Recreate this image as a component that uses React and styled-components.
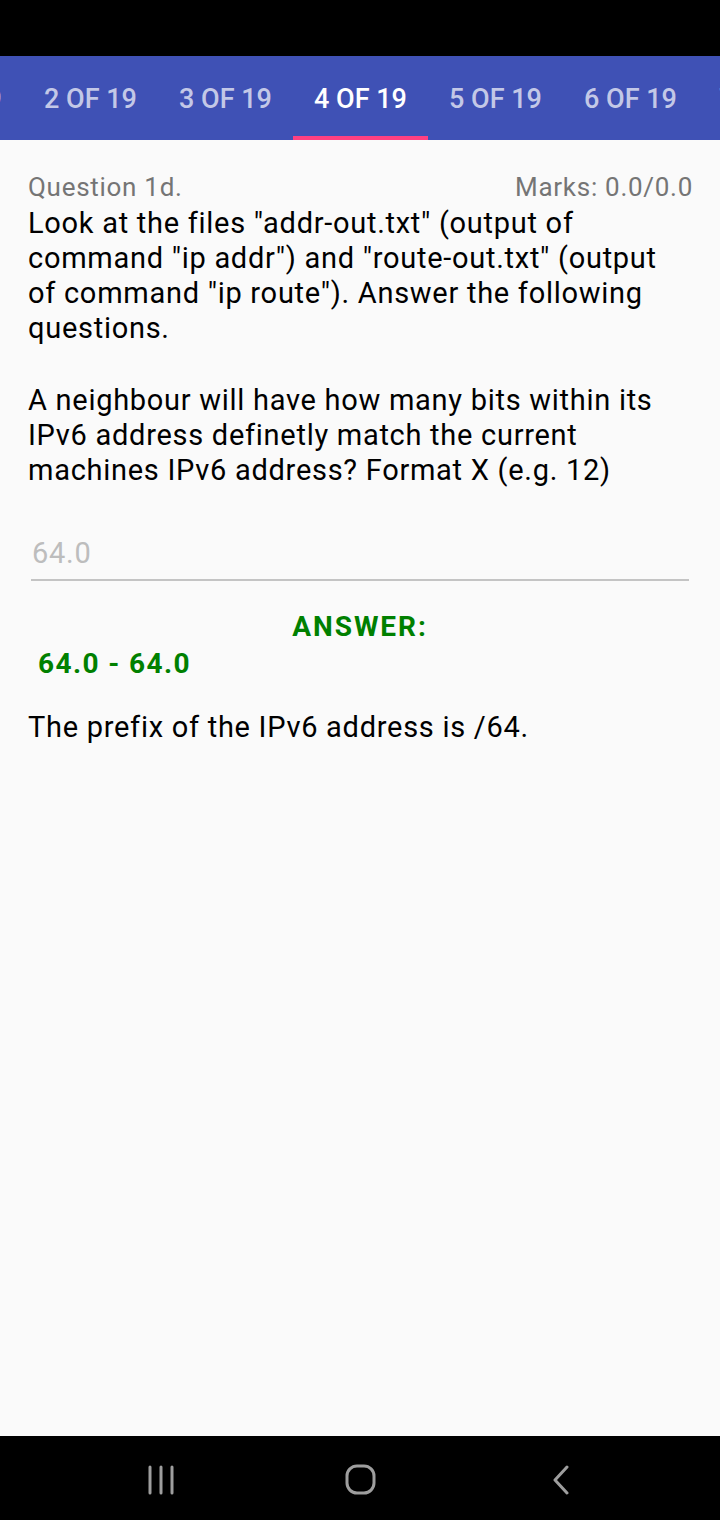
import React from "react";
import styled, { createGlobalStyle } from "styled-components";

const GlobalStyle = createGlobalStyle`
    html, body {
        margin: 0;
        padding: 0;
        background: #fafafa;
        font-family: Roboto, "Liberation Sans", sans-serif;
    }
`;

const Screen = styled.div`
    width: 720px;
    height: 1520px;
    display: flex;
    flex-direction: column;
    background: #fafafa;
    overflow: hidden;
`;

const StatusBar = styled.div`
    height: 56px;
    background: #000;
    flex-shrink: 0;
`;

const TabBar = styled.div`
    height: 84px;
    background: #3f51b5;
    display: flex;
    flex-shrink: 0;
    margin-left: -112px;
`;

const Tab = styled.div`
    position: relative;
    width: 135px;
    flex-shrink: 0;
    display: flex;
    align-items: center;
    justify-content: center;
    padding-top: 2px;
    box-sizing: border-box;
    font-size: 27px;
    font-weight: 500;
    color: ${({ active }) => (active ? "#ffffff" : "rgba(255,255,255,0.7)")};
    white-space: nowrap;

    &::after {
        content: "";
        position: absolute;
        left: 0;
        right: 0;
        bottom: 0;
        height: 4px;
        background: ${({ active }) => (active ? "#ff4081" : "transparent")};
    }
`;

const Content = styled.div`
    flex: 1;
    padding: 30px 28px 0;
    letter-spacing: 0.045em;
`;

const HeaderRow = styled.div`
    display: flex;
    justify-content: space-between;
    align-items: baseline;
    color: #757575;
    font-size: 26px;
    line-height: 34px;
    margin-right: -1px;
`;

const Body = styled.p`
    margin: ${({ gap }) => gap}px 0 0;
    color: #000;
    font-size: 29px;
    line-height: 35px;
`;

const InputWrap = styled.div`
    margin: 45px 3px 0 3px;
    padding: 0 1px 6px;
    border-bottom: 2px solid #c4c4c4;
    font-size: 29px;
    line-height: 40px;
    color: #bdbdbd;
`;

const AnswerTitle = styled.div`
    margin-top: 28px;
    text-align: center;
    color: #008000;
    font-weight: 700;
    font-size: 28px;
    line-height: 36px;
    letter-spacing: 0.07em;
`;

const AnswerRange = styled.div`
    padding-left: 10px;
    color: #008000;
    font-weight: 700;
    font-size: 28px;
    line-height: 38px;
    letter-spacing: 0.05em;
`;

const Explanation = styled.div`
    margin-top: 27px;
    color: #000;
    font-size: 29px;
    line-height: 35px;
`;

const NavBar = styled.div`
    height: 84px;
    background: #000;
    flex-shrink: 0;
    display: flex;
    align-items: center;
    justify-content: center;
    gap: 140px;
    padding-left: 2px;
`;

const NavButton = styled.div`
    width: 60px;
    display: flex;
    justify-content: center;
    align-items: center;
    padding-top: 4px;
`;

const tabs = [1, 2, 3, 4, 5, 6, 7];

export default function App() {
    return (
        <Screen>
            <GlobalStyle />
            <StatusBar />
            <TabBar>
                {tabs.map((n) => (
                    <Tab key={n} active={n === 4}>
                        {n} OF 19
                    </Tab>
                ))}
            </TabBar>
            <Content>
                <HeaderRow>
                    <span>Question 1d.</span>
                    <span>Marks: 0.0/0.0</span>
                </HeaderRow>
                <Body gap={2}>
                    Look at the files "addr-out.txt" (output of command "ip addr") and
                    "route-out.txt" (output of command "ip route"). Answer the following
                    questions.
                </Body>
                <Body gap={37}>
                    A neighbour will have how many bits within its IPv6 address definetly
                    match the current machines IPv6 address? Format X (e.g. 12)
                </Body>
                <InputWrap>64.0</InputWrap>
                <AnswerTitle>ANSWER:</AnswerTitle>
                <AnswerRange>64.0 - 64.0</AnswerRange>
                <Explanation>The prefix of the IPv6 address is /64.</Explanation>
            </Content>
            <NavBar>
                <NavButton>
                    <svg width="28" height="30" viewBox="0 0 28 30">
                        <g stroke="#9e9e9e" strokeWidth="3" strokeLinecap="round">
                            <line x1="3" y1="2" x2="3" y2="28" />
                            <line x1="14" y1="2" x2="14" y2="28" />
                            <line x1="25" y1="2" x2="25" y2="28" />
                        </g>
                    </svg>
                </NavButton>
                <NavButton>
                    <svg width="32" height="32" viewBox="0 0 32 32">
                        <rect x="2" y="2" width="27" height="27" rx="10" fill="none" stroke="#9e9e9e" strokeWidth="3" />
                    </svg>
                </NavButton>
                <NavButton>
                    <svg width="18" height="30" viewBox="0 0 18 30">
                        <polyline points="15,2 3,15 15,28" fill="none" stroke="#9e9e9e" strokeWidth="3" strokeLinecap="round" strokeLinejoin="round" />
                    </svg>
                </NavButton>
            </NavBar>
        </Screen>
    );
}
